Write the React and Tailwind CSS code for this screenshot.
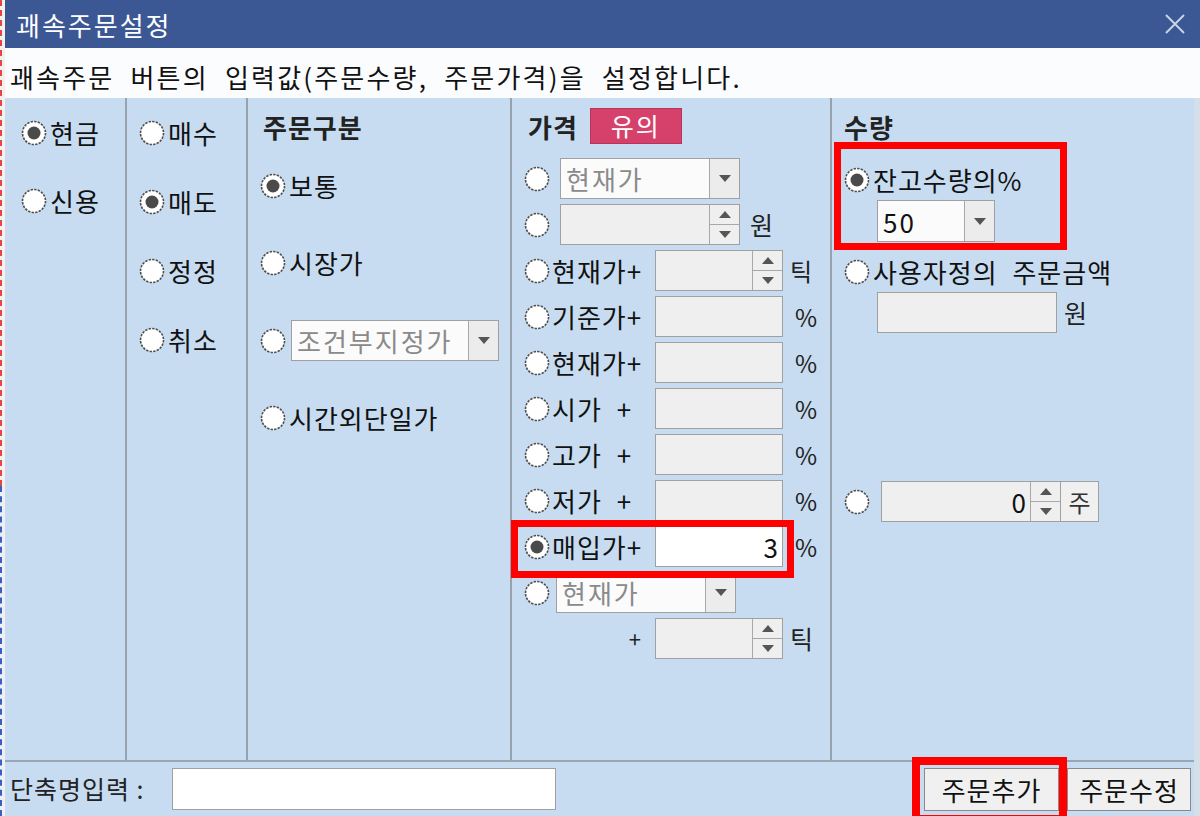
import React from 'react';

const FONT = "font-['Noto_Sans_CJK_KR','Noto_Sans',sans-serif]";

const Up = () => (
  <svg width="12" height="7" viewBox="0 0 12 7">
    <path d="M0 7h12L6 0z" fill="#555" />
  </svg>
);

const Down = () => (
  <svg width="12" height="7" viewBox="0 0 12 7">
    <path d="M0 0h12L6 7z" fill="#555" />
  </svg>
);

const Radio = ({ on }) => (
  <svg width="26" height="26" viewBox="0 0 26 26" className="shrink-0">
    <circle cx="13" cy="13" r="11.5" fill="#fff" stroke="#4e4e4e" strokeWidth="1.6" strokeDasharray="2.4 1.2" />
    {on && <circle cx="13" cy="13" r="6.5" fill="#4a4a4a" />}
  </svg>
);

const Spin = () => (
  <div className="w-[30px] h-full flex flex-col border-l border-[#a8a8a8] bg-[#efefef]">
    <div className="flex-1 flex items-center justify-center"><Up /></div>
    <div className="h-px bg-[#a8a8a8]" />
    <div className="flex-1 flex items-center justify-center"><Down /></div>
  </div>
);

const Select = ({ text, w, dim = true }) => (
  <div className={`h-full flex border border-[#a0a0a0] bg-[#fbfbfb] ${w}`}>
    <div className={`flex-1 flex items-center pl-[5px] text-[26px] tracking-[2px] ${dim ? 'text-[#8a8a8a]' : 'text-[#111]'}`}>{text}</div>
    <div className="w-[30px] flex items-center justify-center border-l border-[#a8a8a8] bg-[#ececec]"><Down /></div>
  </div>
);

const Box = ({ w, spin, value, white }) => (
  <div className={`h-full flex border border-[#a0a0a0] ${white ? 'bg-white' : 'bg-[#efefef]'} ${w}`}>
    <div className="flex-1 flex items-center justify-end pr-[4px] text-[26px] text-[#111]">{value}</div>
    {spin && <Spin />}
  </div>
);

const Opt = ({ on, label }) => (
  <div className="h-[40px] flex items-center gap-[3px]">
    <Radio on={on} />
    <span className="text-[26px] leading-none text-[#111] tracking-[1px]">{label}</span>
  </div>
);

const PriceRow = ({ label, on, spin, unit, value }) => (
  <div className="h-[41px] flex items-center">
    <div className="w-[131px] h-full flex items-center gap-[2px]">
      <Radio on={on} />
      <span className="text-[26px] leading-none text-[#111] whitespace-pre tracking-[1px]">{label}</span>
    </div>
    <Box w="w-[128px]" spin={spin} value={value} white={on} />
    <span className={`text-[24px] text-[#222] ${unit === '%' ? 'ml-[12px]' : 'ml-[7px]'}`}>{unit}</span>
  </div>
);

export default function App() {
  return (
    <div className={`w-[1200px] h-[816px] flex overflow-hidden ${FONT} [word-spacing:8px]`}>
      <div className="w-[5px] flex flex-col">
        <div className="flex-1 border-l-[2px] border-dashed border-[#e04848] bg-[#f4f0ee]" />
        <div className="h-[330px] border-l-[2px] border-dashed border-[#3a5fc0] bg-[#eef0f6]" />
      </div>

      <div className="flex-1 flex flex-col">
        <div className="h-[48px] bg-[#3b5894] flex items-center justify-between pl-[11px] pr-[14px]">
          <span className="text-[26px] text-white tracking-[2px]">괘속주문설정</span>
          <svg width="22" height="22" viewBox="0 0 22 22">
            <path d="M2 2L20 20M20 2L2 20" stroke="#c9d3e6" strokeWidth="2" />
          </svg>
        </div>

        <div className="h-[50px] bg-[#fbfcfe] flex items-center pl-[5px] pt-[6px]">
          <span className="text-[26px] text-[#111] tracking-[2.2px]">괘속주문 버튼의 입력값(주문수량, 주문가격)을 설정합니다.</span>
        </div>

        <div className="flex-1 flex bg-[#c7dcf0]">
          <div className="flex-1 flex flex-col">
            <div className="flex-1 flex">
              <div className="w-[122px] border-r-2 border-[#96a2ae] pl-[16px] pt-[15px] flex flex-col gap-[28px]">
                <Opt on label="현금" />
                <Opt label="신용" />
              </div>

              <div className="w-[121px] border-r-2 border-[#96a2ae] pl-[12px] pt-[15px] flex flex-col gap-[29px]">
                <Opt label="매수" />
                <Opt on label="매도" />
                <Opt label="정정" />
                <Opt label="취소" />
              </div>

              <div className="w-[264px] border-r-2 border-[#96a2ae] pl-[12px] pt-[10px] flex flex-col">
                <div className="h-[36px] flex items-center pl-[3px] text-[26px] font-bold text-[#222] tracking-[1px]">주문구분</div>
                <div className="mt-[22px] flex flex-col gap-[37px]">
                  <Opt on label="보통" />
                  <Opt label="시장가" />
                  <div className="h-[41px] flex items-center gap-[5px]">
                    <Radio />
                    <Select text="조건부지정가" w="w-[208px]" />
                  </div>
                  <Opt label="시간외단일가" />
                </div>
              </div>

              <div className="w-[320px] border-r-2 border-[#96a2ae] pl-[12px] pt-[10px] flex flex-col">
                <div className="h-[36px] flex items-center gap-[12px]">
                  <span className="pl-[4px] text-[26px] font-bold text-[#222] tracking-[1px]">가격</span>
                  <span className="w-[92px] h-full flex items-center justify-center bg-[#d6416b] border border-[#b8355a] text-[25px] text-white tracking-[2px]">유의</span>
                </div>
                <div className="mt-[14px] flex flex-col gap-[5px]">
                  <div className="h-[41px] flex items-center gap-[10px]">
                    <Radio />
                    <Select text="현재가" w="w-[180px]" />
                  </div>
                  <div className="h-[41px] flex items-center gap-[10px]">
                    <Radio />
                    <Box w="w-[180px]" spin />
                    <span className="text-[25px] text-[#222]">원</span>
                  </div>
                  <PriceRow label="현재가+" spin unit="틱" />
                  <PriceRow label="기준가+" unit="%" />
                  <PriceRow label="현재가+" unit="%" />
                  <PriceRow label="시가 +" unit="%" />
                  <PriceRow label="고가 +" unit="%" />
                  <PriceRow label="저가 +" unit="%" />
                  <PriceRow label="매입가+" on unit="%" value="3" />
                  <div className="h-[41px] flex items-center gap-[6px]">
                    <Radio />
                    <Select text="현재가" w="w-[180px]" />
                  </div>
                  <div className="h-[41px] flex items-center">
                    <span className="w-[131px] pr-[14px] text-right text-[22px] text-[#222]">+</span>
                    <Box w="w-[128px]" spin />
                    <span className="ml-[7px] text-[25px] text-[#222]">틱</span>
                  </div>
                </div>
              </div>

              <div className="flex-1 pl-[12px] pt-[10px] flex flex-col">
                <div className="h-[36px] flex items-center text-[26px] font-bold text-[#222] tracking-[1px]">수량</div>
                <div className="mt-[16px]"><Opt on label="잔고수량의%" /></div>
                <div className="h-[42px] pl-[33px]"><Select text="50" w="w-[118px]" dim={false} /></div>
                <div className="mt-[10px]"><Opt label="사용자정의 주문금액" /></div>
                <div className="h-[41px] pl-[33px] flex items-center gap-[7px]">
                  <Box w="w-[180px]" />
                  <span className="text-[25px] text-[#222]">원</span>
                </div>
                <div className="mt-[148px] h-[41px] flex items-center gap-[11px]">
                  <Radio />
                  <div className="h-full flex">
                    <Box w="w-[180px]" spin value="0" />
                    <div className="w-[38px] h-full flex items-center justify-center border border-l-0 border-[#a0a0a0] bg-[#f0f0f0] text-[24px] text-[#333]">주</div>
                  </div>
                </div>
              </div>
            </div>

            <div className="h-[56px] border-t-2 border-[#9aa6b2] flex items-center pl-[5px] pr-[3px]">
              <span className="w-[162px] text-[25px] text-[#222] tracking-[1px] [word-spacing:0px]">단축명입력 :</span>
              <div className="w-[384px] h-[42px] bg-white border border-[#a0a0a0]" />
              <div className="flex-1" />
              <button className="w-[135px] h-[43px] bg-[#f0f0f0] border border-[#8a8a8a] text-[26px] text-[#111] tracking-[1px]">주문추가</button>
              <button className="ml-[8px] w-[124px] h-[43px] bg-[#f0f0f0] border border-[#8a8a8a] text-[26px] text-[#111] tracking-[1px]">주문수정</button>
            </div>
          </div>
          <div className="w-[6px] bg-[#d5dfea]" />
        </div>
      </div>

      <div className="absolute left-[834px] top-[142px] w-[233px] h-[108px] border-[7px] border-[#ff0000]" />
      <div className="absolute left-[511px] top-[520px] w-[283px] h-[58px] border-[7px] border-[#ff0000]" />
      <div className="absolute left-[912px] top-[757px] w-[155px] h-[66px] border-[8px] border-[#ff0000]" />
    </div>
  );
}
